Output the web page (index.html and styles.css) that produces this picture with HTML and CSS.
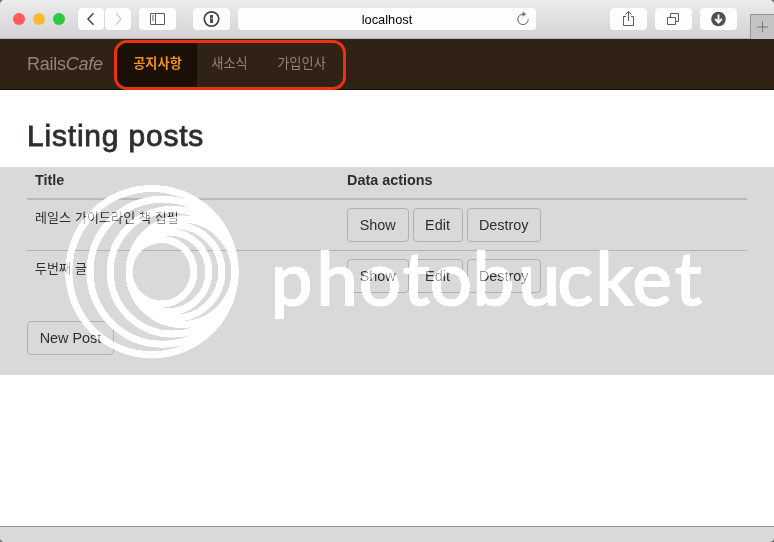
FILE: index.html
```
<!DOCTYPE html>
<html lang="ko">
<head>
<meta charset="utf-8">
<title>RailsCafe</title>
<link rel="stylesheet" href="styles.css">
</head>
<body>
<div class="window">
  <header class="toolbar">
    <div class="lights"><i class="red"></i><i class="yellow"></i><i class="green"></i></div>
    <div class="history">
      <span class="tool"><svg viewBox="0 0 26 22"><path d="M15.500 5.200 10 11l5.500 5.800" stroke="#444" stroke-width="1.500"/></svg></span>
      <span class="tool"><svg viewBox="0 0 26 22"><path d="M11 5.200 16 11l-5 5.800" stroke="#ccc" stroke-width="1.300"/></svg></span>
    </div>
    <span class="tool sidebar"><svg viewBox="0 0 37 22"><path d="M11.500 5.500h14v11h-14zM16.500 5.500v11M13 8h2M13 10h2M13 12h2"/></svg></span>
    <span class="tool pass"><svg viewBox="0 0 37 22"><circle cx="18.500" cy="11" r="7.200" stroke="#444" stroke-width="1.700"/><path d="M18.500 7v8" stroke="#444" stroke-width="2.800"/><path d="M18 10.500h2" stroke="#fff" stroke-width=".6"/></svg></span>
    <div class="address"><span>localhost</span>
      <svg class="reload" viewBox="0 0 16 16"><path d="M8.500 3.200A5.200 5.200 0 1 0 13.200 8.400"/><path d="M7.500.6 11.300 3.200 7.500 5.700z" fill="#777" stroke="none"/></svg>
    </div>
    <span class="tool share"><svg viewBox="0 0 37 22"><path d="M16 8.500h-2.500v9h10v-9H21M18.500 13V3.500M15.500 6.500l3-3 3 3"/></svg></span>
    <span class="tool tabs"><svg viewBox="0 0 37 22"><path d="M12.500 9.500h8v7h-8zM15.500 9.500v-4h8v8h-3"/></svg></span>
    <span class="tool downloads"><svg viewBox="0 0 37 22"><circle cx="18.500" cy="11" r="7.300" fill="#505053" stroke="none"/><path d="M18.500 6.500v7M15.200 11l3.300 3.500 3.300-3.500" stroke="#fff" stroke-width="1.900"/></svg></span>
    <span class="newtab"><svg viewBox="0 0 23 24"><path d="M11.500 6.500v11M6 12h11" stroke="#777"/></svg></span>
  </header>
  <nav class="navbar">
    <a class="brand">Rails<em>Cafe</em></a>
    <div class="menu">
      <a class="active">공지사항</a><a>새소식</a><a>가입인사</a>
    </div>
  </nav>
  <main>
    <h1>Listing posts</h1>
    <section class="listing">
      <table>
        <thead><tr><th>Title</th><th>Data actions</th></tr></thead>
        <tbody>
          <tr><td>레일스 가이드라인 책 집필</td><td><div class="actions"><a class="btn show">Show</a><a class="btn edit">Edit</a><a class="btn destroy">Destroy</a></div></td></tr>
          <tr><td>두번째 글</td><td><div class="actions"><a class="btn show">Show</a><a class="btn edit">Edit</a><a class="btn destroy">Destroy</a></div></td></tr>
        </tbody>
      </table>
      <a class="btn new">New Post</a>
      <svg class="watermark" viewBox="0 167 774 208">
        <g class="rings">
          <circle cx="152" cy="271.700" r="83.200"/>
          <circle cx="162.500" cy="271.700" r="72.500"/>
          <circle cx="172.500" cy="271.700" r="62.300"/>
          <circle cx="182" cy="271.700" r="52.800"/>
          <circle cx="175.500" cy="271.700" r="46.300"/>
          <circle cx="169" cy="271.700" r="39.800"/>
          <circle cx="161.500" cy="271.700" r="32.300"/>
        </g>
        <text class="wordmark" y="304.500" x="271 316.500 359 403 430 472.500 518.500 557.500 595.500 632.500 675">photobucket</text>
      </svg>
    </section>
  </main>
  <footer class="statusbar"></footer>
</div>
</body>
</html>
```
FILE: styles.css
```
* { box-sizing: border-box; }
body {
  margin: 0;
  background: #777;
  font-family: "Liberation Sans", "Noto Sans CJK KR", sans-serif;
  font-size: 14.4px;
  color: #2c2e30;
}
.window {
  width: 774px;
  height: 542px;
  display: flex;
  flex-direction: column;
  background: #fff;
  border-radius: 5px;
  overflow: hidden;
}
svg { display: block; fill: none; stroke: #5c5c5c; stroke-width: 1; }
.toolbar {
  height: 39px;
  display: flex;
  align-items: flex-start;
  padding: 8px 0 0 13px;
  background: linear-gradient(#ececec, #d4d2d5);
  border-bottom: 1px solid #bbb8b8;
}
.lights { display: flex; gap: 8px; margin-top: 5px; width: 65px; }
.lights i { width: 12px; height: 12px; border-radius: 50%; }
.red { background: #fc5b57; }
.yellow { background: #fdbb31; }
.green { background: #2bc940; }
.tool {
  width: 37px;
  height: 22px;
  background: #fdfdfd;
  border-radius: 4px;
  box-shadow: 0 0 1px #ccc;
}
.tool svg { width: 100%; height: 22px; }
.history { display: flex; gap: 1px; width: 53px; }
.history .tool { width: 26px; }
.sidebar { margin-left: 8px; }
.pass { margin-left: 17px; }
.address {
  position: relative;
  width: 298px;
  height: 22px;
  margin-left: 8px;
  background: #fdfdfd;
  border-radius: 4px;
  text-align: center;
  font-size: 12.8px;
  line-height: 24px;
  color: #000;
}
.reload { position: absolute; right: 5px; top: 3px; width: 16px; height: 16px; }
.share { margin-left: 74px; }
.tabs, .downloads { margin-left: 8px; }
.newtab {
  width: 24px;
  height: 25px;
  margin: 6px 0 0 auto;
  background: #c5c3c5;
  border: solid #989698;
  border-width: 1px 0 0 1px;
}
.navbar {
  height: 51px;
  display: flex;
  padding-left: 27px;
  background: #302214;
  border-bottom: 1px solid #1b0d07;
}
.brand {
  width: 87px;
  font-size: 18px;
  line-height: 50px;
  letter-spacing: -.25px;
  color: #8c8580;
}
.menu {
  width: 232px;
  height: 50px;
  margin-top: 1px;
  display: flex;
  border: 3px solid #e93212;
  border-radius: 13px;
  overflow: hidden;
  font-size: 13.2px;
  line-height: 41px;
  color: #8c8580;
}
.menu a { width: 65px; text-align: center; }
.menu .active { width: 80px; padding-left: 1px; background: #1a1008; color: #f58f1d; font-weight: 600; }
.menu a:last-child { width: 79px; }
main { flex: 1; }
h1 {
  margin: 0;
  height: 77px;
  padding: 25px 0 0 27px;
  font-size: 30px;
  line-height: 42px;
  font-weight: 400;
  letter-spacing: .8px;
  -webkit-text-stroke: .8px #2c2e30;
}
.listing {
  position: relative;
  height: 208px;
  padding: 0 27px;
  background: #d9d9d9;
}
table { width: 720px; border-collapse: separate; border-spacing: 0; table-layout: fixed; }
th {
  height: 33px;
  padding: 0 8px 5px;
  text-align: left;
  border-bottom: 2px solid #b9b9b9;
}
th:first-child { width: 312px; }
td { height: 50px; padding: 8px 8px 0; vertical-align: top; }
td:first-child { font-size: 13px; line-height: 20px; letter-spacing: .1px; }
tr + tr td { border-top: 1px solid #b3b3b3; }
.actions { display: flex; gap: 4px; }
.btn {
  display: block;
  height: 34px;
  border: 1px solid #b0b0b0;
  border-radius: 4px;
  line-height: 33px;
  text-align: center;
}
.show { width: 61.5px; }
.edit { width: 50px; }
.destroy { width: 74.5px; }
.new { width: 87px; margin-top: 21px; }
.watermark {
  position: absolute;
  left: 0;
  top: 0;
  width: 774px;
  height: 208px;
  mix-blend-mode: plus-lighter;
}
.rings { fill: none; stroke: #606060; stroke-width: 6.5; }
.wordmark { font: 400 74px Lato, sans-serif; fill: #606060; stroke: #606060; stroke-width: 1.6; }
.statusbar { height: 16px; background: #d9d9d9; border-top: 1px solid #8e8e8e; }
```
